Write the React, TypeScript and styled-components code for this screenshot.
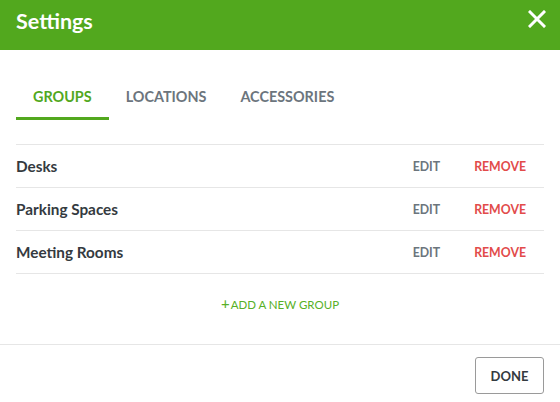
import React from "react";
import styled, { createGlobalStyle } from "styled-components";

const Global = createGlobalStyle`
  html, body { margin: 0; padding: 0; background: #ffffff; }
  body { font-family: "Lato", "Noto Sans", sans-serif; }
  * { box-sizing: border-box; }
`;

const GREEN = "#52a81e";

const Dialog = styled.div`
  width: 560px;
  height: 402px;
  display: flex;
  flex-direction: column;
  background: #fff;
`;

const Header = styled.header`
  height: 50px;
  background: ${GREEN};
  display: flex;
  align-items: center;
  justify-content: space-between;
  padding: 0 12px 0 16px;
`;

const Title = styled.h1`
  margin: 0;
  color: #fff;
  font-size: 21.5px;
  font-weight: 700;
  line-height: 1;
  margin-top: -7px;
`;

const CloseButton = styled.button`
  background: none;
  border: none;
  padding: 0;
  width: 22px;
  height: 22px;
  display: flex;
  align-items: center;
  justify-content: center;
  cursor: pointer;
  margin-top: -13px;
`;

const Body = styled.div`
  flex: 1;
  padding: 28px 16px 0;
  display: flex;
  flex-direction: column;
`;

const Tabs = styled.nav`
  display: flex;
`;

const Tab = styled.button<{ $active?: boolean }>`
  background: none;
  border: none;
  border-bottom: 3px solid ${(p) => (p.$active ? GREEN : "transparent")};
  height: 42px;
  padding: 0 17px 2px;
  font-family: inherit;
  font-size: 14.4px;
  font-weight: 700;
  color: ${(p) => (p.$active ? GREEN : "#6c757d")};
  cursor: pointer;
`;

const List = styled.ul`
  list-style: none;
  margin: 24px 0 0;
  padding: 0;
  border-top: 1px solid #e6e6e6;
`;

const Row = styled.li`
  height: 43px;
  border-bottom: 1px solid #e6e6e6;
  display: flex;
  align-items: center;
  padding-right: 18px;
`;

const Name = styled.span`
  flex: 1;
  font-size: 15.3px;
  font-weight: 700;
  color: #343a40;
`;

const Action = styled.button<{ $danger?: boolean }>`
  background: none;
  border: none;
  padding: 0;
  font-family: inherit;
  font-size: 12.3px;
  font-weight: 700;
  color: ${(p) => (p.$danger ? "#e24b4a" : "#6c757d")};
  margin-left: ${(p) => (p.$danger ? "34px" : "0")};
  cursor: pointer;
`;

const AddRow = styled.div`
  height: 60px;
  display: flex;
  align-items: center;
  justify-content: center;
`;

const AddLink = styled.button`
  background: none;
  border: none;
  padding: 0;
  display: flex;
  align-items: center;
  font-family: inherit;
  font-size: 11.5px;
  font-weight: 400;
  color: #57b027;
  cursor: pointer;
`;

const Plus = styled.span`
  font-size: 15px;
  line-height: 1;
  margin-right: 1px;
  margin-top: -2px;
`;

const Footer = styled.footer`
  border-top: 1px solid #e6e6e6;
  padding: 12px 16px 8px;
  display: flex;
  justify-content: flex-end;
`;

const DoneButton = styled.button`
  width: 69px;
  height: 37px;
  background: #fff;
  border: 1px solid #9a9a9a;
  border-radius: 3px;
  font-family: inherit;
  font-size: 13px;
  font-weight: 700;
  color: #343a40;
  cursor: pointer;
`;

const groups = ["Desks", "Parking Spaces", "Meeting Rooms"];

export default function App() {
  return (
    <Dialog>
      <Global />
      <Header>
        <Title>Settings</Title>
        <CloseButton aria-label="Close">
          <svg width="18" height="18" viewBox="0 0 18 18">
            <path d="M2 2 L16 16 M16 2 L2 16" stroke="#fff" strokeWidth="3" strokeLinecap="square" />
          </svg>
        </CloseButton>
      </Header>
      <Body>
        <Tabs>
          <Tab $active>GROUPS</Tab>
          <Tab>LOCATIONS</Tab>
          <Tab>ACCESSORIES</Tab>
        </Tabs>
        <List>
          {groups.map((g) => (
            <Row key={g}>
              <Name>{g}</Name>
              <Action>EDIT</Action>
              <Action $danger>REMOVE</Action>
            </Row>
          ))}
        </List>
        <AddRow>
          <AddLink>
            <Plus>+</Plus>ADD A NEW GROUP
          </AddLink>
        </AddRow>
      </Body>
      <Footer>
        <DoneButton>DONE</DoneButton>
      </Footer>
    </Dialog>
  );
}
